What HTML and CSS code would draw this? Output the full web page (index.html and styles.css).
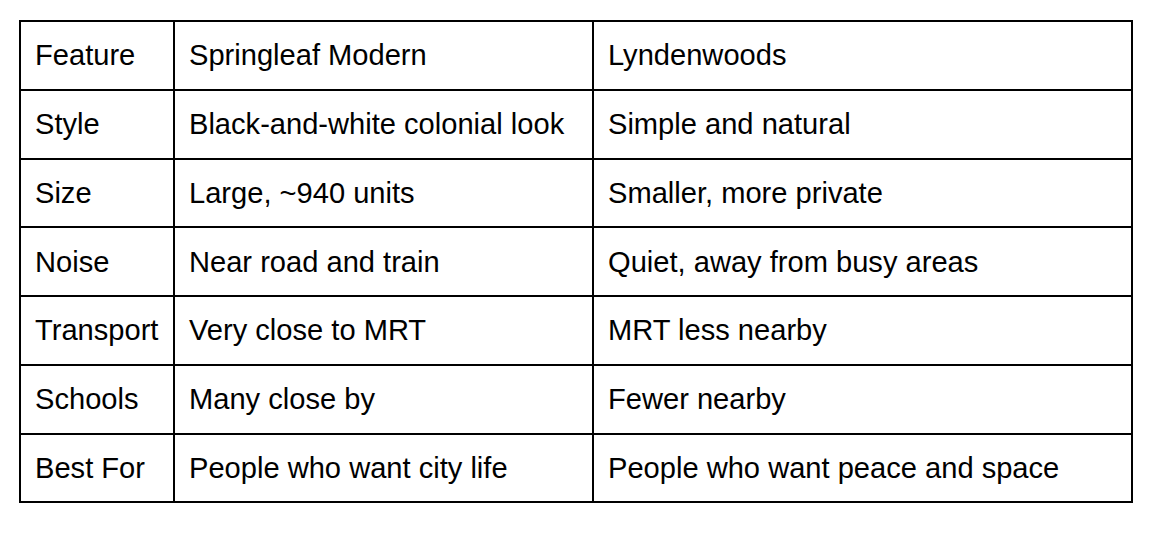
FILE: index.html
```html
<!DOCTYPE html>
<html>
<head>
<meta charset="utf-8">
<link rel="stylesheet" href="styles.css">
</head>
<body>
<table class="cmp">
  <colgroup>
    <col class="c1">
    <col class="c2">
    <col class="c3">
  </colgroup>
  <tbody>
    <tr><td>Feature</td><td>Springleaf Modern</td><td>Lyndenwoods</td></tr>
    <tr><td>Style</td><td>Black-and-white colonial look</td><td>Simple and natural</td></tr>
    <tr><td>Size</td><td>Large, ~940 units</td><td>Smaller, more private</td></tr>
    <tr><td>Noise</td><td>Near road and train</td><td>Quiet, away from busy areas</td></tr>
    <tr><td>Transport</td><td>Very close to MRT</td><td>MRT less nearby</td></tr>
    <tr><td>Schools</td><td>Many close by</td><td>Fewer nearby</td></tr>
    <tr><td>Best For</td><td>People who want city life</td><td>People who want peace and space</td></tr>
  </tbody>
</table>
</body>
</html>
```
FILE: styles.css
```css
html, body {
  margin: 0;
  padding: 0;
  background: #ffffff;
}
body {
  padding: 20px 0 0 19px;
  font-family: "Liberation Sans", Arial, sans-serif;
  color: #000000;
}
.cmp {
  border-collapse: collapse;
  table-layout: fixed;
  width: 1114px;
  font-size: 29.1px;
}
.c1 { width: 154px; }
.c2 { width: 419px; }
.c3 { width: 539px; }
.cmp td {
  border: 2px solid #000000;
  height: 68.75px;
  padding: 0 0 0 14px;
  vertical-align: middle;
  white-space: nowrap;
  box-sizing: border-box;
  line-height: 32px;
}
```
